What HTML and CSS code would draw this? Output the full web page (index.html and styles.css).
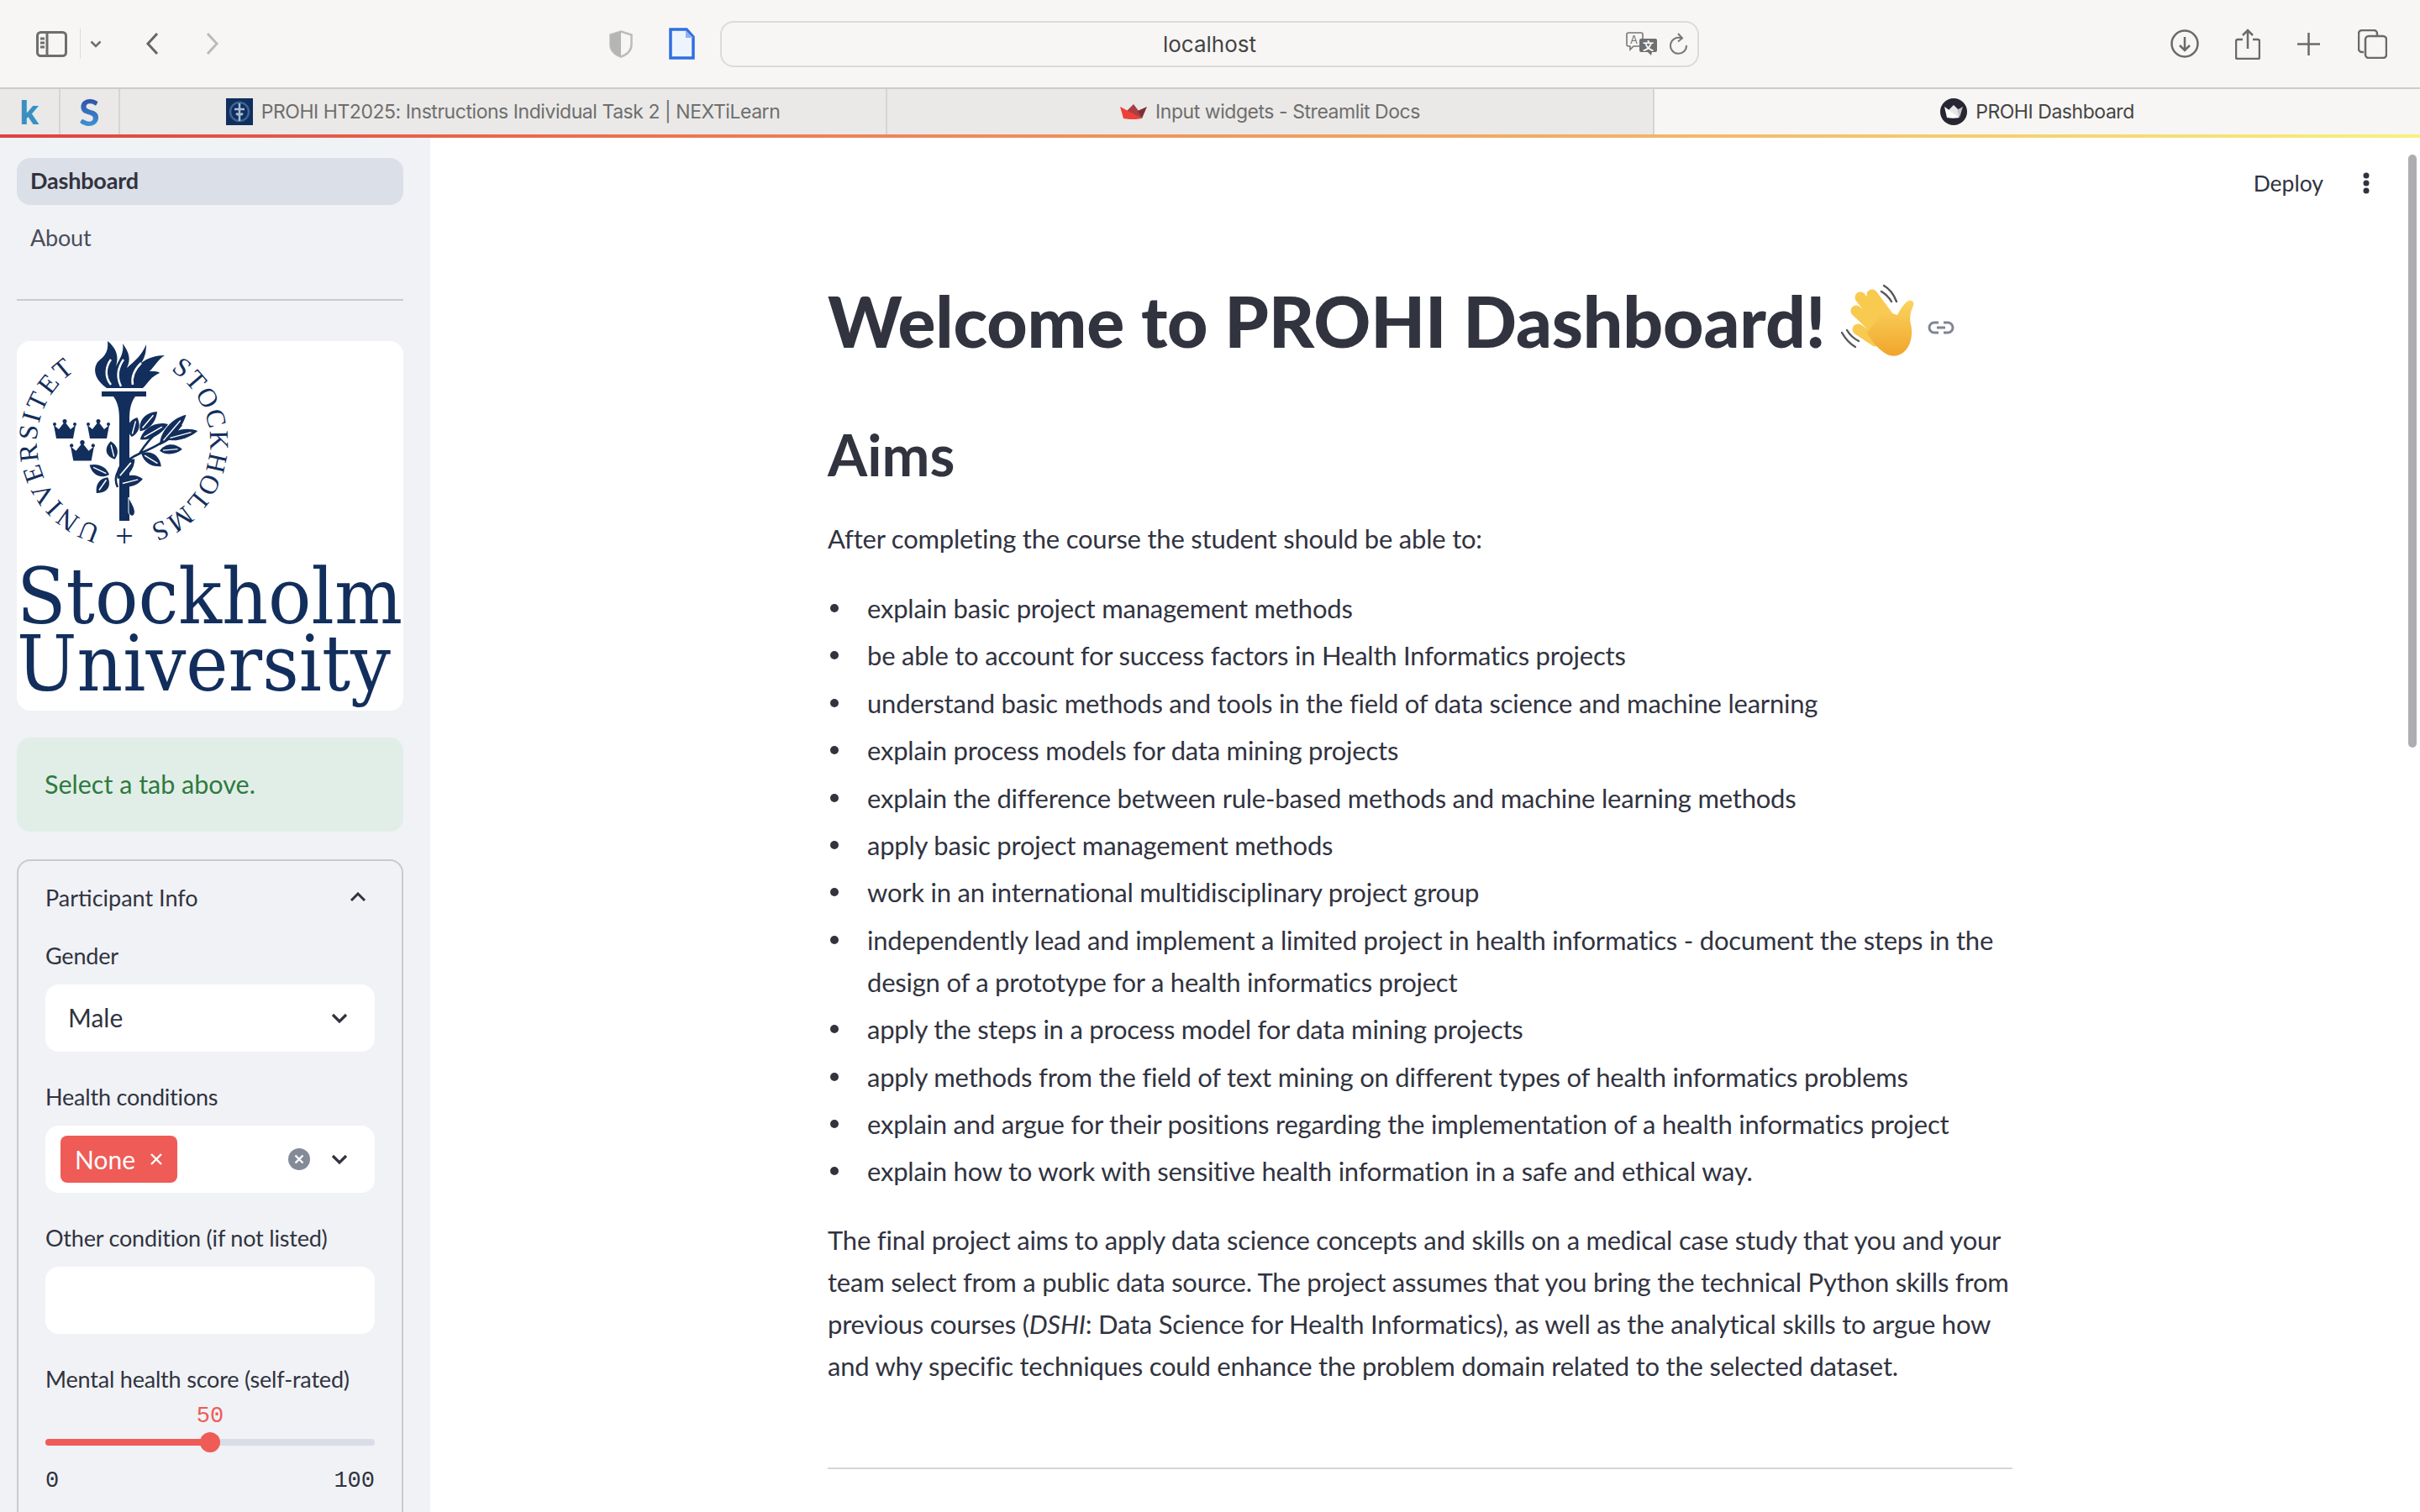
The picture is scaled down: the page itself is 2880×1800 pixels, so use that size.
FILE: index.html
```html
<!DOCTYPE html>
<html lang="en">
<head>
  <meta charset="UTF-8">
  <title>PROHI Dashboard</title>
  <link rel="stylesheet" href="styles.css">
</head>
<body>
  <!-- browser toolbar -->
  <header class="toolbar">
    <svg class="tb-sidebar" width="37" height="31" viewBox="0 0 37 31" fill="none" stroke="#6e6e6e" stroke-width="3">
      <rect x="1.5" y="1.5" width="34" height="28" rx="4"/>
      <path d="M13 2v27M5 9h5M5 14h5M5 19h5"/>
    </svg>
    <span class="tb-divider"></span>
    <svg class="tb-caret" width="14" height="9" viewBox="0 0 14 9" fill="none" stroke="#6e6e6e" stroke-width="2.5"><path d="M1.5 1.5L7 7l5.500-5.500"/></svg>
    <svg class="tb-back" width="16" height="28" viewBox="0 0 16 28" fill="none" stroke="#666" stroke-width="3"><path d="M14 2L3 14l11 12"/></svg>
    <svg class="tb-forward" width="16" height="28" viewBox="0 0 16 28" fill="none" stroke="#bbb" stroke-width="3"><path d="M2 2l11 12L2 26"/></svg>
    <svg class="tb-shield" width="28" height="33" viewBox="0 0 28 33"><path d="M14 1.500L26.500 5.500V17C26.500 24 21 29 14 31.500 7 29 1.500 24 1.500 17V5.500z" fill="none" stroke="#bcbcba" stroke-width="2.500"/><path d="M14 1.500L1.500 5.500V17C1.500 24 7 29 14 31.500z" fill="#b5b5b3"/></svg>
    <svg class="tb-doc" width="31" height="38" viewBox="0 0 31 38"><path d="M2 2h19l8 9v25H2z" fill="#eef4fe" stroke="#2f6fe0" stroke-width="3.500"/><path d="M20 3v9h9z" fill="#8db4f2"/></svg>
    <div class="urlbar">
      <span class="url-text">localhost</span>
      <svg class="url-translate" width="39" height="28" viewBox="0 0 39 28">
        <path d="M3 1h15a2 2 0 0 1 2 2v12a2 2 0 0 1-2 2H9l-4 4v-4H3a2 2 0 0 1-2-2V3a2 2 0 0 1 2-2z" fill="none" stroke="#777" stroke-width="1.600"/>
        <text x="5" y="14" class="url-glyph">A</text>
        <path d="M18 8h17a2 2 0 0 1 2 2v12a2 2 0 0 1-2 2h-4l-1 4-4-4h-8a2 2 0 0 1-2-2V10a2 2 0 0 1 2-2z" fill="#6f6f6f"/>
        <text x="20" y="21" class="url-glyph url-glyph-light">文</text>
      </svg>
      <svg class="url-reload" width="22" height="26" viewBox="0 0 22 26" fill="none" stroke="#777" stroke-width="2"><path d="M14 6.500A9.500 9.500 0 1 0 20 15"/><path d="M10 1l5 5.500-5 4"/></svg>
    </div>
    <svg class="tb-download" width="34" height="34" viewBox="0 0 34 34" fill="none" stroke="#6a6a6a" stroke-width="2.500"><circle cx="17" cy="17" r="15.500"/><path d="M17 9v16M11 19l6 6 6-6"/></svg>
    <svg class="tb-share" width="30" height="37" viewBox="0 0 30 37" fill="none" stroke="#6a6a6a" stroke-width="2.500"><path d="M9 13H3a2 2 0 0 0-2 2v19a2 2 0 0 0 2 2h24a2 2 0 0 0 2-2V15a2 2 0 0 0-2-2h-6"/><path d="M15 24V2M9 8l6-6 6 6"/></svg>
    <svg class="tb-plus" width="27" height="27" viewBox="0 0 27 27" stroke="#6a6a6a" stroke-width="2.500"><path d="M13.500 0v27M0 13.500h27"/></svg>
    <svg class="tb-tabs" width="35" height="35" viewBox="0 0 35 35" fill="none" stroke="#6a6a6a" stroke-width="2.500"><path d="M7 27H5a4 4 0 0 1-4-4V5a4 4 0 0 1 4-4h14a4 4 0 0 1 4 4v2"/><rect x="9" y="8" width="25" height="26" rx="4"/></svg>
  </header>

  <!-- tab strip -->
  <nav class="tabstrip">
    <div class="tab tab-pin"><span class="pin-k">k</span></div>
    <div class="tab tab-pin"><span class="pin-s">S</span></div>
    <div class="tab tab-wide">
      <svg width="32" height="32" viewBox="0 0 32 32"><rect width="32" height="32" fill="#0f2f5e"/><circle cx="16" cy="16" r="11" fill="none" stroke="#3f6391" stroke-width="2.500"/><path d="M16 6v21M10 13h12M12 18c2 2 6 2 8 0" fill="none" stroke="#a9bdd4" stroke-width="2.500"/></svg>
      <span>PROHI HT2025: Instructions Individual Task 2 | NEXTiLearn</span>
    </div>
    <div class="tab tab-wide">
      <svg width="32" height="18" viewBox="0 0 32 18"><path d="M16 0L7 9l19 8-4-9z" fill="#a83f45"/><path d="M32 3L21 8l5 9z" fill="#7d2f35"/><path d="M0 3l26 14c-7 1.500-15 1.500-22 0z" fill="#ee4038"/></svg>
      <span>Input widgets - Streamlit Docs</span>
    </div>
    <div class="tab tab-active">
      <svg width="32" height="32" viewBox="0 0 32 32"><circle cx="16" cy="16" r="16" fill="#262730"/><path d="M16 8l-6 6 12 9 1-8z" fill="#e6e6ea"/><path d="M27 10l-7 4 3 9z" fill="#c2c3ca"/><path d="M5 10l18 13c-5 1-10 1-15 0z" fill="#fff"/></svg>
      <span>PROHI Dashboard</span>
    </div>
  </nav>
  <div class="loadbar"></div>

  <div class="app">
    <aside class="sidebar">
      <a class="nav-item nav-item-active">Dashboard</a>
      <a class="nav-item">About</a>
      <hr class="side-rule">

      <div class="logo">
        <svg width="460" height="440" viewBox="0 0 460 440">
          <defs>
            <path id="seal-left" d="M100.300 220.500A103 103 0 0 1 70.900 34.600"/>
            <path id="seal-right" d="M183.100 34.600A103 103 0 0 1 157.100 219.500"/>
            <g id="leaf">
              <path d="M0 0C2.500-3.400 7-3.400 10 0 7 2.200 3 2.600 0 0z" fill="#122e5c"/>
              <path d="M1.500-.1L8-.2" stroke="#fff" stroke-width=".5" fill="none"/>
            </g>
            <g id="crown">
              <path d="M1 7l6 5 7-9 7 9 6-5-3 16H4z" fill="#122e5c"/>
              <circle cx="14" cy="2.500" r="2.500" fill="#122e5c"/>
              <circle cx="2" cy="6" r="2" fill="#122e5c"/>
              <circle cx="26" cy="6" r="2" fill="#122e5c"/>
            </g>
          </defs>
          <text class="seal-text"><textPath href="#seal-left" textLength="235">UNIVERSITET</textPath></text>
          <text class="seal-text"><textPath href="#seal-right" textLength="232">STOCKHOLMS</textPath></text>
          <text class="seal-plus" x="128" y="245" text-anchor="middle">+</text>

          <!-- flame -->
          <path d="M107 56C95 48 90 36 95 27 99 20 110 18 108 0 118 8 122 18 118 30 122 22 128 14 126 3 134 14 136 22 131 32 140 24 148 18 154 4 154 14 152 20 148 26 156 20 166 17 176 17 168 22 164 30 158 36 164 36 168 36 170 38 160 42 156 50 150 56z" fill="#122e5c"/>
          <path d="M112 52C104 42 106 30 112 22M124 54C118 42 120 32 127 22M138 52C136 42 140 34 148 26" stroke="#fff" stroke-width="2.500" fill="none"/>
          <!-- torch -->
          <path d="M101 60h53v6h-13c-6 8-7 18-7 28v120h-12V94c0-10-1-20-7-28h-14z" fill="#122e5c"/>
          <path d="M133 186c3 6 9 14 7 20-2 4-6 2-7-2z" fill="#122e5c" stroke="#fff" stroke-width="1"/>

          <use href="#crown" transform="translate(43 93)"/>
          <use href="#crown" transform="translate(83 93)"/>
          <use href="#crown" transform="translate(63 118) scale(1.070)"/>

          <!-- olive branch -->
          <path d="M120 174C112 158 128 142 146 134 160 128 176 122 196 100M146 134C152 124 158 116 172 104" stroke="#122e5c" stroke-width="2.500" fill="none"/>
          <use href="#leaf" transform="translate(116.700 140.700) rotate(-103) scale(2.200 3)"/>
          <use href="#leaf" transform="translate(136.700 114) rotate(-74) scale(2.400 3)"/>
          <use href="#leaf" transform="translate(146.700 107.300) rotate(-49) scale(3.100 3)"/>
          <use href="#leaf" transform="translate(146.700 117.300) rotate(-29) scale(3.800 3)"/>
          <use href="#leaf" transform="translate(170 124) rotate(-49) scale(4.800 3)"/>
          <use href="#leaf" transform="translate(176.700 117.300) rotate(-15) scale(4 2.600)"/>
          <use href="#leaf" transform="translate(170 130.700) rotate(-4) scale(2.700 2.600)"/>
          <use href="#leaf" transform="translate(148.300 134) rotate(33) scale(2.800 3)"/>
          <use href="#leaf" transform="translate(110 159) rotate(206) scale(2.600 2.800)"/>
          <use href="#leaf" transform="translate(108.300 162.300) rotate(126) scale(2.300 3)"/>
          <use href="#leaf" transform="translate(120 164) rotate(-49) scale(3.100 3.400)"/>
          <use href="#leaf" transform="translate(121.700 170.700) rotate(-13) scale(2.900 3)"/>

          <text class="logo-word" x="0" y="336" textLength="459" lengthAdjust="spacingAndGlyphs">Stockholm</text>
          <text class="logo-word" x="0" y="416" textLength="445" lengthAdjust="spacingAndGlyphs">University</text>
        </svg>
      </div>

      <div class="alert">Select a tab above.</div>

      <section class="expander">
        <div class="expander-head">
          <span>Participant Info</span>
          <svg width="20" height="12" viewBox="0 0 20 12" fill="none" stroke="#31333f" stroke-width="3"><path d="M2 10l8-8 8 8"/></svg>
        </div>
        <div class="expander-body">
          <label class="field-label">Gender</label>
          <div class="control control-select">
            <span>Male</span>
            <svg class="chevron" width="20" height="12" viewBox="0 0 20 12" fill="none" stroke="#31333f" stroke-width="3.200"><path d="M2 2l8 8 8-8"/></svg>
          </div>

          <label class="field-label">Health conditions</label>
          <div class="control control-multi">
            <span class="tag">None<svg width="16" height="16" viewBox="0 0 16 16" stroke="#fff" stroke-width="2.400"><path d="M2 2l12 12M14 2L2 14"/></svg></span>
            <svg class="clear" width="26" height="26" viewBox="0 0 26 26"><circle cx="13" cy="13" r="13" fill="#858a99"/><path d="M8.500 8.500l9 9M17.500 8.500l-9 9" stroke="#fff" stroke-width="2.400"/></svg>
            <svg class="chevron" width="20" height="12" viewBox="0 0 20 12" fill="none" stroke="#31333f" stroke-width="3.200"><path d="M2 2l8 8 8-8"/></svg>
          </div>

          <label class="field-label">Other condition (if not listed)</label>
          <div class="control"></div>

          <label class="field-label">Mental health score (self-rated)</label>
          <div class="slider">
            <div class="slider-value">50</div>
            <div class="slider-track">
              <div class="slider-fill"></div>
              <span class="slider-thumb"></span>
            </div>
            <div class="slider-ticks"><span>0</span><span>100</span></div>
          </div>
        </div>
      </section>
    </aside>

    <main class="main">
      <div class="app-header">
        <span>Deploy</span>
        <svg width="8" height="26" viewBox="0 0 8 26" fill="#31333f"><circle cx="4" cy="4" r="3.500"/><circle cx="4" cy="13" r="3.500"/><circle cx="4" cy="22" r="3.500"/></svg>
      </div>
      <div class="content">
        <h1>Welcome to PROHI Dashboard!
          <svg class="wave" width="88" height="88" viewBox="0 0 88 88" fill="none">
            <defs>
              <linearGradient id="wave-fill" x1="0" y1="0" x2="0" y2="1">
                <stop offset="0" stop-color="#fbd45f"/>
                <stop offset="1" stop-color="#f0a52c"/>
              </linearGradient>
            </defs>
            <path d="M52 2c7 4 12 11 15 19M49 9c5 3 9 7 12 12M2 58c4 7 9 13 16 17M8 55c3 5 8 10 14 13" stroke="#55555a" stroke-width="2.400" stroke-linecap="round"/>
            <g stroke="#f8ca50" stroke-width="13" stroke-linecap="round">
              <path d="M24 16l23 30M38 13l20 27M19 32l23 22M21 54l21 14"/>
            </g>
            <path d="M32 58L52 32l16 5c4-7 8-15 14-17 5-1 6 3 5 6-3 6-5 14-3 22 3 12 0 26-8 33-6 5-14 6-20 3-8-4-17-13-24-26z" fill="url(#wave-fill)"/>
          </svg>
          <svg class="anchor" width="32" height="16" viewBox="0 0 32 16" fill="none" stroke="#808495" stroke-width="3"><path d="M13 2H8a6 6 0 0 0 0 12h5M19 2h5a6 6 0 0 1 0 12h-5M11 8h10"/></svg>
        </h1>
        <h2>Aims</h2>
        <p class="intro">After completing the course the student should be able to:</p>
        <ul class="aims">
          <li>explain basic project management methods</li>
          <li>be able to account for success factors in Health Informatics projects</li>
          <li>understand basic methods and tools in the field of data science and machine learning</li>
          <li>explain process models for data mining projects</li>
          <li>explain the difference between rule-based methods and machine learning methods</li>
          <li>apply basic project management methods</li>
          <li>work in an international multidisciplinary project group</li>
          <li>independently lead and implement a limited project in health informatics - document the steps in the design of a prototype for a health informatics project</li>
          <li>apply the steps in a process model for data mining projects</li>
          <li>apply methods from the field of text mining on different types of health informatics problems</li>
          <li>explain and argue for their positions regarding the implementation of a health informatics project</li>
          <li>explain how to work with sensitive health information in a safe and ethical way.</li>
        </ul>
        <p class="final">The final project aims to apply data science concepts and skills on a medical case study that you and your team select from a public data source. The project assumes that you bring the technical Python skills from previous courses (<em>DSHI</em>: Data Science for Health Informatics), as well as the analytical skills to argue how and why specific techniques could enhance the problem domain related to the selected dataset.</p>
        <hr class="main-rule">
      </div>
      <div class="scrollbar"></div>
    </main>
  </div>
</body>
</html>
```

FILE: styles.css
```css
* {
  margin: 0;
  padding: 0;
  box-sizing: border-box;
}

body {
  width: 2880px;
  height: 1800px;
  overflow: hidden;
  display: flex;
  flex-direction: column;
  font-family: 'Lato', sans-serif;
  color: #31333f;
  background: #fff;
}

/* Browser toolbar */
.toolbar {
  height: 104px;
  flex: none;
  display: flex;
  align-items: center;
  padding-left: 43px;
  background: #f7f6f4;
}

.toolbar svg {
  flex: none;
}

.tb-divider {
  width: 1px;
  height: 36px;
  margin-left: 15px;
  background: #dcdbd9;
}

.tb-caret { margin-left: 11px; }
.tb-back { margin-left: 52px; }
.tb-forward { margin-left: 56px; }
.tb-shield { margin-left: 464px; }
.tb-doc { margin-left: 43px; }

.urlbar {
  width: 1165px;
  height: 55px;
  margin-left: 30px;
  display: flex;
  align-items: center;
  justify-content: flex-end;
  padding-right: 11px;
  position: relative;
  border: 2px solid #dcdbd9;
  border-radius: 16px;
}

.url-text {
  position: absolute;
  left: 0;
  right: 0;
  text-align: center;
  font-family: 'Inter', sans-serif;
  font-size: 26px;
  color: #444;
}

.url-reload { margin-left: 13px; }

.url-glyph {
  font-family: 'Inter', 'Noto Sans CJK SC', sans-serif;
  font-size: 13px;
  fill: #777;
}

.url-glyph-light {
  fill: #fff;
  font-weight: 700;
}

.tb-download { margin-left: 561px; }
.tb-share { margin-left: 43px; }
.tb-plus { margin-left: 44px; }
.tb-tabs { margin-left: 45px; }

/* Tab strip */
.tabstrip {
  height: 56px;
  flex: none;
  display: flex;
  background: #eae9e7;
  border-top: 2px solid #cdccca;
  font-family: 'Inter', sans-serif;
  font-size: 23px;
  letter-spacing: -.45px;
  color: #6e6e6e;
}

.tab {
  display: flex;
  align-items: center;
  justify-content: center;
  gap: 10px;
  border-right: 2px solid #d6d5d3;
}

.tab-pin {
  width: 71.500px;
  font-weight: 700;
  font-size: 40px;
}

.tab-wide {
  width: 913px;
}

.tab-active {
  flex: 1;
  background: #f7f6f4;
  color: #444;
  border-right: 0;
}

.pin-k {
  color: #3a8fc2;
}

.pin-s {
  font-family: 'Lato', sans-serif;
  font-weight: 900;
  font-size: 44px;
  background: linear-gradient(#2b3a9e, #40a6e2);
  -webkit-background-clip: text;
  background-clip: text;
  color: transparent;
}

.loadbar {
  height: 4px;
  flex: none;
  background: linear-gradient(90deg, #e0403f 0%, #ee7f55 33%, #f2b066 66%, #f7f27c 100%);
}

/* App layout */
.app {
  flex: 1;
  min-height: 0;
  display: flex;
}

.sidebar {
  width: 512px;
  flex: none;
  overflow: hidden;
  padding: 24px 32px 0 20px;
  background: #f0f2f6;
}

.nav-item {
  display: flex;
  align-items: center;
  height: 56px;
  margin-bottom: 10px;
  padding-left: 16px;
  border-radius: 16px;
  font-size: 27px;
  letter-spacing: -.2px;
  color: #4b4d59;
}

.nav-item-active {
  padding-bottom: 3px;
  background: #dbdfe7;
  color: #31333f;
  font-weight: 700;
}

.side-rule {
  border: 0;
  height: 2px;
  margin-top: 46px;
  background: #c8cad0;
}

.logo {
  height: 440px;
  margin-top: 48px;
  background: #fff;
  border-radius: 16px;
  overflow: hidden;
}

.logo svg {
  display: block;
}

.seal-text {
  font-family: 'Liberation Serif', serif;
  font-size: 32px;
  fill: #122e5c;
}

.seal-plus {
  font-family: 'Liberation Serif', serif;
  font-size: 38px;
  fill: #122e5c;
}

.logo-word {
  font-family: 'DejaVu Serif', serif;
  font-size: 92px;
  fill: #122e5c;
}

.alert {
  height: 112px;
  margin-top: 32px;
  display: flex;
  align-items: center;
  padding: 0 0 2px 33px;
  background: #e1eee8;
  border-radius: 16px;
  font-size: 30.500px;
  color: #2f7a3d;
}

.expander {
  margin-top: 33px;
  padding: 0 32px 60px;
  border: 2px solid #c8cad0;
  border-radius: 16px;
}

.expander-head {
  height: 86px;
  display: flex;
  align-items: center;
  justify-content: space-between;
  font-size: 27px;
  padding-right: 10px;
}

.expander-body {
  padding-top: 7px;
}

.field-label {
  display: block;
  height: 40px;
  line-height: 40px;
  margin-bottom: 14px;
  font-size: 27px;
  letter-spacing: -.2px;
}

.control {
  height: 80px;
  margin-bottom: 34px;
  display: flex;
  align-items: center;
  padding: 0 32px 0 27px;
  background: #fff;
  border-radius: 16px;
  font-size: 30px;
}

.control-select {
  justify-content: space-between;
}

.control-select span {
  margin-bottom: 2px;
}

.control-multi {
  padding-left: 18px;
}

.tag {
  width: 139px;
  height: 56px;
  display: flex;
  align-items: center;
  justify-content: space-between;
  padding: 0 17px;
  background: #ef5b56;
  border-radius: 8px;
  color: #fff;
}

.clear {
  margin-left: auto;
  margin-right: 25px;
}

/* Slider */
.slider {
  margin-top: -12px;
}

.slider-value {
  height: 44px;
  line-height: 44px;
  text-align: center;
  font-family: 'Liberation Mono', monospace;
  font-size: 27px;
  color: #ef5b56;
}

.slider-track {
  position: relative;
  height: 8px;
  margin-top: 5px;
  background: #d9dde6;
  border-radius: 4px;
}

.slider-fill {
  width: 50%;
  height: 100%;
  background: #ef5b56;
  border-radius: 4px;
}

.slider-thumb {
  position: absolute;
  left: 50%;
  top: -8px;
  width: 24px;
  height: 24px;
  margin-left: -12px;
  background: #ef5b56;
  border-radius: 50%;
}

.slider-ticks {
  display: flex;
  justify-content: space-between;
  height: 40px;
  line-height: 40px;
  margin-top: 22px;
  font-family: 'Liberation Mono', monospace;
  font-size: 27px;
}

/* Main column */
.main {
  flex: 1;
  position: relative;
  min-width: 0;
  overflow: hidden;
  padding-left: 473px;
}

.app-header {
  height: 108px;
  display: flex;
  align-items: center;
  justify-content: flex-end;
  gap: 47px;
  margin-left: -473px;
  padding-right: 60px;
  font-size: 26.500px;
}

.content {
  width: 1410px;
  padding-top: 55px;
}

h1 {
  height: 110px;
  line-height: 110px;
  display: flex;
  align-items: center;
  font-size: 84px;
  font-weight: 900;
  letter-spacing: -.15px;
  white-space: nowrap;
}

.wave {
  margin-left: 17px;
}

.anchor {
  margin-left: 16px;
  margin-top: 16px;
}

h2 {
  height: 90px;
  line-height: 90px;
  margin-top: 59px;
  font-size: 68px;
  font-weight: 700;
}

.intro,
.final,
.aims li {
  font-size: 31px;
  line-height: 50px;
  letter-spacing: -.22px;
}

.intro {
  margin-top: 30px;
}

.aims {
  margin-top: 33px;
  padding-left: 47px;
  list-style: none;
}

.aims li {
  position: relative;
  margin-bottom: 6.400px;
}

.aims li::before {
  content: "";
  position: absolute;
  left: -44px;
  top: 20px;
  width: 10px;
  height: 10px;
  border-radius: 50%;
  background: #31333f;
}

.final {
  margin-top: 32px;
}

.main-rule {
  border: 0;
  height: 2px;
  margin-top: 96px;
  background: #d5d6da;
}

.scrollbar {
  position: absolute;
  right: 4px;
  top: 20px;
  width: 10px;
  height: 706px;
  background: #aeaeb2;
  border-radius: 5px;
}
```
